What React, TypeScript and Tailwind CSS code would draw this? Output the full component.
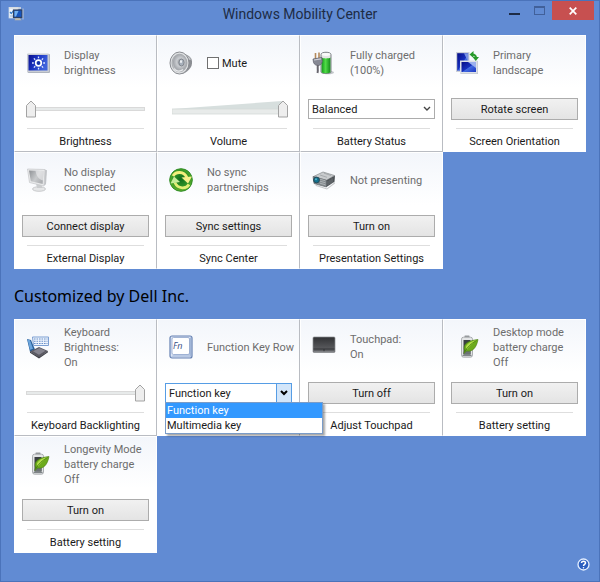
import React, { useState } from 'react';

const DisplayIcon = () => (
  <svg width="24" height="24" viewBox="0 0 24 24">
    <defs>
      <linearGradient id="display" x1="0" y1="0" x2="1" y2="0.4">
        <stop offset="0" stopColor="#0a0f8c" />
        <stop offset="0.5" stopColor="#1b35c4" />
        <stop offset="1" stopColor="#3f63dc" />
      </linearGradient>
    </defs>
    <rect x="1.5" y="3" width="22.5" height="19" rx="1" fill="#aeb4be" />
    <rect x="1" y="2.5" width="22" height="18.5" rx="1" fill="#c9cdd4" />
    <rect x="2.5" y="4" width="19" height="15.5" fill="url(#display)" />
    <circle cx="12.5" cy="12" r="2.8" fill="#1432a8" stroke="#fff" strokeWidth="1.7" />
    <path d="M12.5 5.5v1.8M12.5 16.7v1.8M6 12h1.8M17.2 12H19M7.9 7.4l1.3 1.3M15.8 15.3l1.3 1.3M17.1 7.4l-1.3 1.3M9.2 15.3l-1.3 1.3" stroke="#dfe9ff" strokeWidth="1.3" />
  </svg>
);

const SpeakerIcon = () => (
  <svg width="24" height="24" viewBox="0 0 24 24">
    <defs>
      <radialGradient id="cone" cx="0.55" cy="0.45" r="0.6">
        <stop offset="0" stopColor="#8d9198" />
        <stop offset="0.4" stopColor="#c9ccd0" />
        <stop offset="0.75" stopColor="#a5a8ad" />
        <stop offset="1" stopColor="#d5d7da" />
      </radialGradient>
    </defs>
    <path d="M12 2c5 1 9 3 10.5 6 1 3 .5 6-.5 8-2 3-5 6-9 7z" fill="#8b8e93" />
    <path d="M15 3.5c4 1 6 3 7 5l-4 1z" fill="#c5c7ca" />
    <ellipse cx="10.5" cy="12" rx="9.5" ry="11" fill="#dfe1e3" stroke="#898c91" />
    <ellipse cx="10.5" cy="12" rx="7.5" ry="8.8" fill="url(#cone)" stroke="#a0a3a7" strokeWidth="0.8" />
    <ellipse cx="12.5" cy="11.5" rx="2.6" ry="3.5" fill="#a7b0bb" stroke="#777b82" strokeWidth="0.8" />
    <ellipse cx="12" cy="10.5" rx="1" ry="1.6" fill="#eef1f4" />
    <path d="M5 17.500c2 3 6 3.500 9 1" stroke="#e8eaec" strokeWidth="1.2" fill="none" />
  </svg>
);

const BatteryPlugIcon = () => (
  <svg width="24" height="24" viewBox="0 0 24 24">
    <defs>
      <linearGradient id="charge" x1="0" y1="0" x2="1" y2="0">
        <stop offset="0" stopColor="#159a1c" />
        <stop offset="0.45" stopColor="#4fdc46" />
        <stop offset="1" stopColor="#138a1a" />
      </linearGradient>
    </defs>
    <ellipse cx="16" cy="21.5" rx="6" ry="1.8" fill="#c2c6ca" />
    <path d="M9 3.500c0-3 10-3 10 0V21c0 2-10 2-10 0z" fill="#e4e6e4" stroke="#70757a" strokeWidth="0.9" />
    <path d="M9.600 6.500c1 1.200 7.700 1.200 8.800 0v14.800c-1 1.300-7.700 1.300-8.800 0z" fill="url(#charge)" />
    <ellipse cx="14" cy="3.5" rx="4.2" ry="1.4" fill="#fafafa" />
    <path d="M3.500 2v6M7 1.500v5.500" stroke="#b58a5c" strokeWidth="1.6" />
    <path d="M1 8l9-1.500.3 4c-.5 2.500-2 3.700-3.700 4-2.300.3-4.300-1-5.100-3z" fill="#868894" stroke="#5c5d68" strokeWidth="0.7" />
    <path d="M2 9l7-1.200" stroke="#cfd0d8" strokeWidth="1.2" />
    <path d="M6 14c-1 3 .5 5-.5 8" stroke="#67656d" strokeWidth="2" fill="none" />
  </svg>
);

const RotateIcon = () => (
  <svg width="24" height="24" viewBox="0 0 24 24">
    <defs>
      <linearGradient id="rotate" x1="0" y1="0" x2="1" y2="1">
        <stop offset="0" stopColor="#060d86" />
        <stop offset="0.5" stopColor="#1730bd" />
        <stop offset="0.55" stopColor="#436be0" />
        <stop offset="1" stopColor="#1a36c4" />
      </linearGradient>
    </defs>
    <rect x="1" y="1" width="13.500" height="20" fill="#ccd0d8" />
    <rect x="2.200" y="2.200" width="11" height="17.500" fill="url(#rotate)" />
    <path d="M9 2.200h4.200V11z" fill="#7892e4" />
    <rect x="5.500" y="10" width="17.500" height="13" fill="#b9bec8" />
    <rect x="5" y="9.500" width="17.500" height="13" fill="#dce0e7" />
    <rect x="6.500" y="11" width="14.500" height="10" fill="url(#rotate)" />
    <path d="M13 11h8v6z" fill="#9bb0ee" />
    <path d="M17 3.500c2.500 0 4 1 4 3.500" stroke="#279a2b" strokeWidth="2" fill="none" />
    <path d="M18.500 0v7L14.500 3.500zM17.500 6h6.500l-3.200 4z" fill="#279a2b" />
  </svg>
);

const MonitorIcon = () => (
  <svg width="24" height="24" viewBox="0 0 24 24">
    <defs>
      <linearGradient id="monitor" x1="0" y1="0" x2="1" y2="0.6">
        <stop offset="0" stopColor="#8e9195" />
        <stop offset="0.6" stopColor="#c9cbcd" />
        <stop offset="1" stopColor="#aeb0b3" />
      </linearGradient>
    </defs>
    <ellipse cx="13" cy="21" rx="6.500" ry="2.300" fill="#e6e7e8" stroke="#c0c2c4" strokeWidth="0.800" />
    <path d="M10 15.500h5l1.500 4.500h-5.500z" fill="#cbcdcf" />
    <path d="M18.500 1.500l2.500.8-1 14-2 1.500z" fill="#c3c5c8" />
    <path d="M1.500 1L19 1.500 18 18 3.500 14.500z" fill="#e9eaeb" stroke="#c4c6c8" strokeWidth="0.700" />
    <path d="M3 2.500l14.500.5L16.700 16 4.800 13.200z" fill="url(#monitor)" />
    <path d="M9.500 2.800l8 .3-.6 9.400c-4-1-6.500-4-7.400-9.700z" fill="#eeeff0" opacity="0.600" />
  </svg>
);

const SyncIcon = () => (
  <svg width="24" height="24" viewBox="0 0 24 24">
    <defs>
      <radialGradient id="sync" cx="0.5" cy="0.45" r="0.55">
        <stop offset="0" stopColor="#116b1c" />
        <stop offset="0.6" stopColor="#2e9226" />
        <stop offset="1" stopColor="#65b52c" />
      </radialGradient>
    </defs>
    <circle cx="12" cy="12" r="11.300" fill="url(#sync)" stroke="#2d8a25" />
    <path d="M4 8C6.500 3.500 15 2.500 18.200 10" stroke="#f3ee7c" strokeWidth="2.800" fill="none" />
    <path d="M12.500 9.500L23 8.500l-4 7z" fill="#f6f08a" />
    <path d="M20 16.500C17.500 21 9 21.500 5.800 14.500" stroke="#e3ee75" strokeWidth="2.800" fill="none" />
    <path d="M11 14L1.500 15.500l3.500-7z" fill="#c6ec98" />
  </svg>
);

const ProjectorIcon = () => (
  <svg width="24" height="24" viewBox="0 0 24 24">
    <path d="M3 16.500l12 4 8-6.500v1.500l-8 6-11-3.500z" fill="#c5c7c9" />
    <path d="M1.500 8.500L11 4l11.500 3.500-8 4.800z" fill="#c8cbcd" stroke="#85898d" strokeWidth="0.700" />
    <path d="M1 8.500l13.500 3.800V19L2 15.500z" fill="#848a8e" stroke="#61676b" strokeWidth="0.700" />
    <path d="M14.500 12.300l8.500-4.800-.5 6.200-8 5.300z" fill="#4d5256" />
    <path d="M16 12.800v4.500M18 11.600v4.500M20 10.400v4.500" stroke="#777c80" strokeWidth="0.800" />
    <path d="M8 11.200l5.500 1.600M8 13.200l5.500 1.600M8 15.200l5.500 1.600" stroke="#b5babd" strokeWidth="0.800" />
    <path d="M8 7l7 2.300M12 5.200l7 2.300" stroke="#9da1a4" strokeWidth="0.800" />
    <circle cx="4.500" cy="12" r="2.900" fill="#12708d" stroke="#254654" strokeWidth="0.900" />
    <circle cx="4" cy="11.300" r="1" fill="#55b4ca" />
  </svg>
);

const KeyboardIcon = () => (
  <svg width="24" height="24" viewBox="0 0 24 24">
    <path d="M1 4l4 1 4 9.500-5 2.500z" fill="#285f9a" />
    <path d="M1.500 4.500l2.500.7 3 8.500-3 1z" fill="#6aa4dc" />
    <path d="M4 16.500l9-4.500 9 4L13 22.500z" fill="#5b5a63" />
    <path d="M7 16.300l6.500-3.200 6 2.700-6.500 4z" fill="#85848f" />
    <path d="M4 16.500l9 5.500v1.500L4 17.800zM13 22l9-6v1.200l-9 6.300z" fill="#3f4047" />
    <path d="M6.500 2h16v8.500h-15z" fill="#eef4fd" stroke="#7c9fd2" />
    <path d="M8 4h13.500M8 6.200h13.500M8 8.500h13.500" stroke="#6a90c9" strokeWidth="1.100" strokeDasharray="1.600 0.900" />
  </svg>
);

const FnIcon = () => (
  <svg width="24" height="24" viewBox="0 0 24 24">
    <rect x="1" y="1" width="22" height="22" rx="2" fill="#dce5f5" stroke="#6480b2" strokeWidth="1.200" />
    <path d="M2 22l3-3h15l2 3z" fill="#b9c9e4" />
    <path d="M22 2l-2 2v15l2 3z" fill="#a1b6d8" />
    <rect x="3" y="2.500" width="17.500" height="17" rx="1.500" fill="#fff" stroke="#8fa5cc" strokeWidth="0.800" />
    <text x="4" y="14" fontFamily="Open Sans, sans-serif" fontSize="9" fontStyle="italic" fill="#354e82">Fn</text>
  </svg>
);

const TouchpadIcon = () => (
  <svg width="24" height="24" viewBox="0 0 24 24">
    <defs>
      <linearGradient id="pad" x1="0" y1="0" x2="0" y2="1">
        <stop offset="0" stopColor="#303134" />
        <stop offset="1" stopColor="#66676b" />
      </linearGradient>
    </defs>
    <rect x="1" y="2" width="22" height="15.500" rx="1" fill="url(#pad)" stroke="#8b8c90" strokeWidth="0.700" />
    <path d="M1.500 14h21M12 14v3" stroke="#2a2b2e" strokeWidth="0.800" />
    <path d="M2 16.800h20" stroke="#8b8c90" />
  </svg>
);

const LeafBatteryIcon = () => (
  <svg width="24" height="24" viewBox="0 0 24 24">
    <rect x="9.500" y="0.500" width="5" height="2" rx="0.500" fill="#95999c" />
    <rect x="6.500" y="2.200" width="11" height="20" rx="2" fill="#e3e5e6" stroke="#9a9ea1" strokeWidth="0.800" />
    <rect x="8.500" y="5" width="7" height="14.500" fill="#3b4042" />
    <path d="M8.500 17l7-3v5.500h-7z" fill="#6c7375" />
    <path d="M7.500 20.500h9" stroke="#7f8487" strokeWidth="1.200" />
    <path d="M9.500 15.500C7.500 9 13 5.500 23 4.500 21.500 13 17.500 17 11.500 16L9 18.500z" fill="#6cab1c" stroke="#477b10" strokeWidth="0.600" />
    <path d="M10.800 12c2-4 5.500-6 11-6.700C18.500 7.500 15.500 10 12 14.500z" fill="#b2de4a" />
    <path d="M9.500 17C12.500 12 16 8.500 21.500 5.500" stroke="#477f10" strokeWidth="0.900" fill="none" />
  </svg>
);

const AppIcon = () => (
  <svg width="16" height="16" viewBox="0 0 16 16">
    <rect x="1" y="1.500" width="9" height="10.500" fill="#f0f5fb" stroke="#c5d4e6" strokeWidth="0.800" />
    <path d="M1 2h12" stroke="#dcdfe2" strokeWidth="1.600" />
    <path d="M2 6l1.300 1.500L5.500 4.500" stroke="#2f79c8" strokeWidth="1.200" fill="none" />
    <path d="M2 10h3" stroke="#95b4d5" />
    <rect x="5.500" y="4" width="8.500" height="7.500" fill="#1754bb" stroke="#30415f" strokeWidth="1.200" />
    <path d="M6.500 5h4L8 10.500H6.500z" fill="#72b0ee" />
    <path d="M7.500 12.200h4.500l1.500 2h-7z" fill="#c1b9a7" />
    <path d="M15 2.500v11" stroke="#c8ccd2" strokeWidth="0.900" />
  </svg>
);

const Chevron = ({ bold }: { bold?: boolean }) => (
  <svg width="8" height="6" viewBox="0 0 8 6">
    <path d="M1 1l3 3 3-3" fill="none" stroke={bold ? '#000' : '#444'} strokeWidth={bold ? 2 : 1.4} />
  </svg>
);

interface TileProps {
  icon: React.ReactNode;
  status: React.ReactNode;
  label?: string;
  edge?: string;
  children: React.ReactNode;
}

const Tile: React.FC<TileProps> = ({ icon, status, label, edge = 'border-white', children }) => (
  <section className={`flex h-[117px] flex-col border border-t-white border-l-white bg-linear-to-b from-[#f3f6fb] to-white to-45% ${edge}`}>
    <div className="flex h-[54px] shrink-0 items-center pl-[11px] text-[#6d6d6d]">
      <div className="w-[38px] shrink-0">{icon}</div>
      <div className="whitespace-nowrap">{status}</div>
    </div>
    <div className="mt-2 flex h-[22px] items-center px-[7px]">{children}</div>
    {label && (
      <h2 className="mx-3 mt-2 border-t border-[#dedede] pt-[5px] text-center whitespace-nowrap">{label}</h2>
    )}
  </section>
);

const PushButton = ({ children }: { children: React.ReactNode }) => (
  <button className="h-[22px] w-full border border-[#acacac] bg-linear-to-b from-[#f1f1f1] to-[#e4e4e4] text-center hover:border-[#7eb4ea]">
    {children}
  </button>
);

const Slider = ({ label, initial, wedge }: { label: string; initial: number; wedge?: boolean }) => {
  const [value, setValue] = useState(initial);

  return (
    <div className="relative mx-1 flex h-[18px] w-full items-center">
      {wedge ? (
        <svg className="h-full w-full pl-[3px]" viewBox="0 0 114 18" preserveAspectRatio="none">
          <path d="M0 9L108 1v8z" fill="#d7dfde" />
          <path d="M0 9h108v5H0z" fill="#e8ebea" stroke="#d5dad9" strokeWidth="0.8" />
        </svg>
      ) : (
        <div className="h-1 w-full border border-[#d9d9d9] bg-[#e7eaea]" />
      )}
      <div className="pointer-events-none absolute inset-y-0 right-[10px] left-0">
        <svg className="absolute" style={{ left: `${value}%` }} width="10" height="18" viewBox="0 0 10 18">
          <path d="M.5 5.500L5 1l4.500 4.500v11.500h-9z" fill="#eeeeee" stroke="#a3a3a3" />
        </svg>
      </div>
      <input
        type="range"
        aria-label={label}
        value={value}
        onChange={(e) => setValue(Number(e.target.value))}
        className="absolute inset-0 h-full w-full cursor-pointer appearance-none bg-transparent [&::-webkit-slider-thumb]:h-[18px] [&::-webkit-slider-thumb]:w-[10px] [&::-webkit-slider-thumb]:appearance-none [&::-webkit-slider-thumb]:bg-transparent"
      />
    </div>
  );
};

const PowerPlanSelect = () => (
  <div className="relative w-full">
    <select aria-label="Power plan" className="h-5 w-full appearance-none border border-[#acacac] bg-white pl-[3px]">
      <option>Balanced</option>
      <option>Power saver</option>
      <option>High performance</option>
    </select>
    <div className="pointer-events-none absolute inset-y-0 right-1 flex items-center">
      <Chevron />
    </div>
  </div>
);

const keyModes = ['Function key', 'Multimedia key'];

const KeyRowSelect = () => {
  const [mode, setMode] = useState(keyModes[0]);
  const [isOpen, setIsOpen] = useState(true);

  return (
    <div className="relative w-full">
      <select
        aria-label="Function Key Row"
        value={mode}
        onChange={(e) => setMode(e.target.value)}
        onMouseDown={(e) => {
          e.preventDefault();
          setIsOpen(!isOpen);
        }}
        className="h-5 w-full appearance-none border border-[#569de5] bg-white pl-[3px]"
      >
        {keyModes.map((m) => (
          <option key={m}>{m}</option>
        ))}
      </select>
      <div className="pointer-events-none absolute inset-y-0 right-0 flex w-4 items-center justify-center border border-[#569de5] bg-[#d3e6fa]">
        <Chevron bold />
      </div>
      {isOpen && (
        <ul role="listbox" className="absolute top-[19px] left-0 z-10 w-[158px] border border-[#7a9cc8] bg-white shadow-[2px_2px_2px_rgba(0,0,0,0.35)]">
          {keyModes.map((m) => (
            <li
              key={m}
              role="option"
              aria-selected={m === mode}
              onClick={() => {
                setMode(m);
                setIsOpen(false);
              }}
              className={m === mode ? 'bg-[#3399ff] pl-px text-white' : 'pl-px'}
            >
              {m}
            </li>
          ))}
        </ul>
      )}
    </div>
  );
};

const TitleBar = () => (
  <header className="grid h-7 grid-cols-[1fr_auto_1fr] items-start">
    <div className="pt-[5px] pl-[7px]">
      <AppIcon />
    </div>
    <h1 className="text-sm leading-[26px] text-[#1d2b45]">Windows Mobility Center</h1>
    <div className="flex justify-end pr-[5px]">
      <button aria-label="Minimize" className="flex h-[19px] w-6 items-end justify-center pb-[5px]">
        <span className="h-0.5 w-[11px] bg-[#1d2b45]" />
      </button>
      <button aria-label="Maximize" disabled className="flex h-[19px] w-[26px] items-center justify-center">
        <span className="h-[9px] w-[11px] border border-t-2 border-[#41609a]" />
      </button>
      <button aria-label="Close" className="flex h-[19px] w-[42px] items-center justify-center bg-[#c75050]">
        <svg width="8" height="8" viewBox="0 0 8 8">
          <path d="M.7.7l6.600 6.600M7.300.7L.7 7.300" stroke="#fff" strokeWidth="1.700" />
        </svg>
      </button>
    </div>
  </header>
);

export default function App() {
  const [muted, setMuted] = useState(false);

  return (
    <div className="flex min-h-screen flex-col border border-[#4b73ba] bg-[#618bd3] font-['Roboto','Open_Sans',sans-serif] text-[11px] leading-[15px] text-[#1a1a1a]">
      <TitleBar />
      <main className="px-[13px] pt-[6px]">
        <div className="grid grid-cols-4">
          <Tile icon={<DisplayIcon />} status={<>Display<br />brightness</>} label="Brightness" edge="border-r-[#b9bcc2] border-b-[#b9bcc2]">
            <Slider label="Brightness" initial={0} />
          </Tile>
          <Tile
            icon={<SpeakerIcon />}
            status={
              <label className="flex items-center gap-[3px] text-[#1a1a1a]">
                <input
                  type="checkbox"
                  checked={muted}
                  onChange={(e) => setMuted(e.target.checked)}
                  className="size-3 appearance-none border border-[#707070] bg-white checked:bg-[#707070]"
                />
                Mute
              </label>
            }
            label="Volume"
            edge="border-r-[#b9bcc2] border-b-[#b9bcc2]"
          >
            <Slider label="Volume" initial={100} wedge />
          </Tile>
          <Tile icon={<BatteryPlugIcon />} status={<>Fully charged<br />(100%)</>} label="Battery Status" edge="border-r-[#b9bcc2] border-b-[#b9bcc2]">
            <PowerPlanSelect />
          </Tile>
          <Tile icon={<RotateIcon />} status={<>Primary<br />landscape</>} label="Screen Orientation">
            <PushButton>Rotate screen</PushButton>
          </Tile>
          <Tile icon={<MonitorIcon />} status={<>No display<br />connected</>} label="External Display" edge="border-r-[#b9bcc2] border-b-white">
            <PushButton>Connect display</PushButton>
          </Tile>
          <Tile icon={<SyncIcon />} status={<>No sync<br />partnerships</>} label="Sync Center" edge="border-r-[#b9bcc2] border-b-white">
            <PushButton>Sync settings</PushButton>
          </Tile>
          <Tile icon={<ProjectorIcon />} status="Not presenting" label="Presentation Settings">
            <PushButton>Turn on</PushButton>
          </Tile>
        </div>

        <h2 className="pt-[15px] pb-[11px] font-['Noto_Sans',sans-serif] text-base leading-6 text-black">Customized by Dell Inc.</h2>

        <div className="grid grid-cols-4">
          <Tile icon={<KeyboardIcon />} status={<>Keyboard<br />Brightness:<br />On</>} label="Keyboard Backlighting" edge="border-r-[#b9bcc2] border-b-[#b9bcc2]">
            <Slider label="Keyboard Backlighting" initial={100} />
          </Tile>
          <Tile icon={<FnIcon />} status="Function Key Row" edge="border-r-[#b9bcc2] border-b-white">
            <KeyRowSelect />
          </Tile>
          <Tile icon={<TouchpadIcon />} status={<>Touchpad:<br />On</>} label="Adjust Touchpad" edge="border-r-[#b9bcc2] border-b-white">
            <PushButton>Turn off</PushButton>
          </Tile>
          <Tile icon={<LeafBatteryIcon />} status={<>Desktop mode<br />battery charge<br />Off</>} label="Battery setting">
            <PushButton>Turn on</PushButton>
          </Tile>
          <Tile icon={<LeafBatteryIcon />} status={<>Longevity Mode<br />battery charge<br />Off</>} label="Battery setting">
            <PushButton>Turn on</PushButton>
          </Tile>
        </div>
      </main>
      <footer className="mt-auto flex justify-end pr-[9px] pb-[10px]">
        <button aria-label="Help">
          <svg width="13" height="13" viewBox="0 0 13 13">
            <circle cx="6.500" cy="6.500" r="5.500" fill="#2b5fc0" stroke="#e4efff" strokeWidth="1.300" />
            <path d="M4.500 5c0-2.500 4-2.500 4 0 0 1.500-2 1.300-2 3" fill="none" stroke="#fff" strokeWidth="1.500" />
            <circle cx="6.500" cy="9.700" r="0.800" fill="#fff" />
          </svg>
        </button>
      </footer>
    </div>
  );
}
